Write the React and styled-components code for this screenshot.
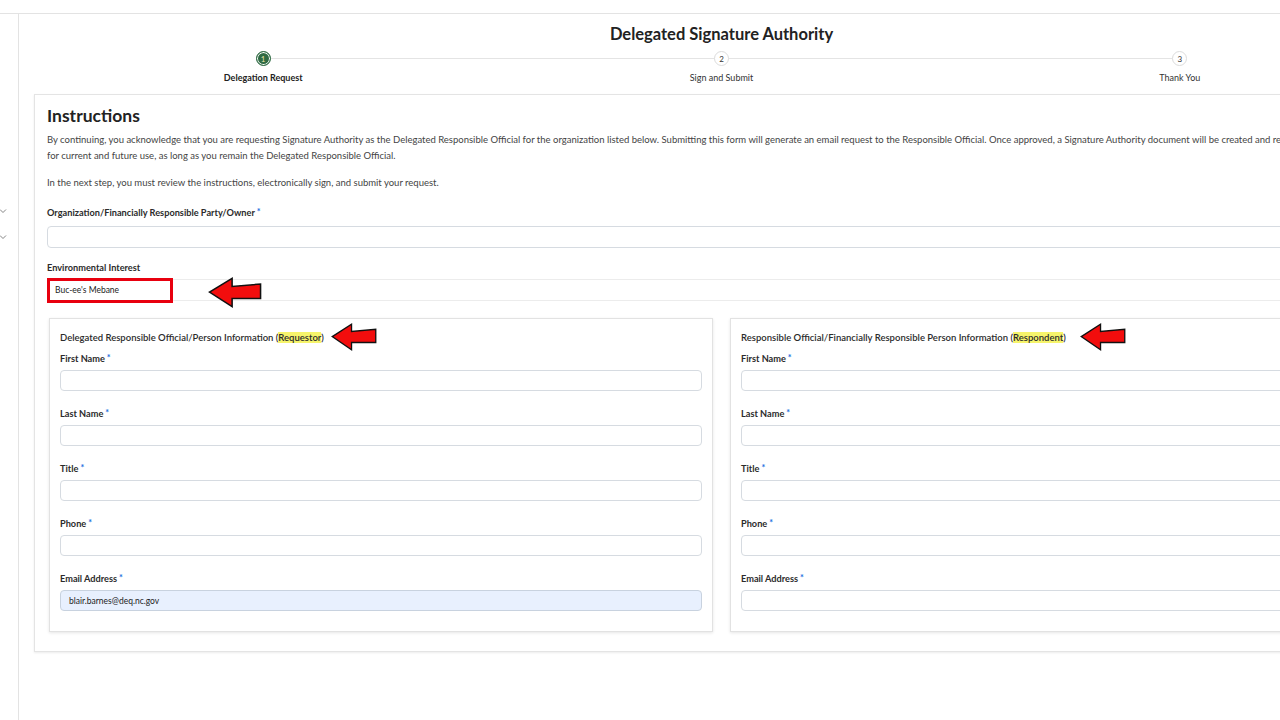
import React from "react";
import styled, { createGlobalStyle } from "styled-components";

const GlobalStyle = createGlobalStyle`
  html, body {
    margin: 0;
    padding: 0;
    overflow: hidden;
    background: #fff;
  }
  body {
    font-family: Lato, "Open Sans", sans-serif;
    color: #2b2b2b;
  }
`;

const Shell = styled.div`
  display: flex;
  flex-direction: column;
  min-height: 720px;
`;

const TopBar = styled.div`
  height: 13px;
  border-bottom: 1px solid #e3e3e3;
`;

const Body = styled.div`
  display: flex;
  flex: 1;
`;

const Sidebar = styled.aside`
  width: 19px;
  flex-shrink: 0;
  border-right: 1px solid #e3e3e3;
  display: flex;
  flex-direction: column;
  gap: 18px;
  padding-top: 193px;
  min-height: 706px;
  box-sizing: border-box;
`;

const Chevron = styled.svg`
  width: 8px;
  height: 8px;
  margin-left: -1px;
`;

const Main = styled.main`
  width: 1375px;
  flex-shrink: 0;
  padding-left: 15px;
`;

const Title = styled.h1`
  margin: 0;
  padding-top: 9px;
  font-size: 16.5px;
  line-height: 22px;
  font-weight: 700;
  text-align: center;
  color: #222;
`;

const Stepper = styled.div`
  position: relative;
  display: grid;
  grid-template-columns: repeat(3, 1fr);
  margin-top: 5px;
  height: 44px;
`;

const StepLine = styled.div`
  position: absolute;
  top: 8px;
  left: 16.667%;
  right: 16.667%;
  height: 1px;
  background: #e4e4e4;
`;

const Step = styled.div`
  position: relative;
  display: flex;
  flex-direction: column;
  align-items: center;
`;

const StepDot = styled.div`
  width: 15px;
  height: 15px;
  box-sizing: border-box;
  border-radius: 50%;
  display: flex;
  align-items: center;
  justify-content: center;
  font-size: 8px;
  background: ${(p) => (p.$active ? "#2f6b43" : "#fff")};
  color: ${(p) => (p.$active ? "#e9e3a8" : "#333")};
  border: 1px solid ${(p) => (p.$active ? "#2f6b43" : "#dcdcdc")};
  box-shadow: ${(p) => (p.$active ? "inset 0 0 0 1px #fff" : "none")};
  margin-top: 1px;
`;

const StepLabel = styled.div`
  margin-top: 6px;
  font-size: 9px;
  font-weight: ${(p) => (p.$active ? 700 : 400)};
  color: ${(p) => (p.$active ? "#222" : "#333")};
`;

const Card = styled.section`
  position: relative;
  border: 1px solid #e4e4e4;
  box-shadow: 0 1px 2px rgba(0, 0, 0, 0.08);
  padding: 9px 12px 20px;
  height: 558px;
  box-sizing: border-box;
`;

const Heading = styled.h2`
  margin: 0;
  font-size: 17.5px;
  line-height: 24px;
  font-weight: 700;
  color: #222;
`;

const Para = styled.p`
  margin: ${(p) => (p.$first ? "4px" : "11px")} 0 0;
  font-size: 9.5px;
  line-height: 16px;
  color: #444;
  white-space: nowrap;
`;

const Field = styled.div`
  position: relative;
  display: flex;
  flex-direction: column;
  gap: ${(p) => (p.$tight ? "5px" : "7px")};
  margin-top: ${(p) => p.$top || "0"};
`;

const Label = styled.label`
  font-size: 9.2px;
  line-height: 12px;
  font-weight: 700;
  color: #2b2b2b;
`;

const Req = styled.span`
  color: #1b6fe0;
  font-size: 9px;
  font-weight: 700;
  vertical-align: top;
  line-height: 9px;
  margin-left: 2px;
`;

const Input = styled.div`
  height: ${(p) => (p.$tall ? "22px" : "21px")};
  box-sizing: border-box;
  border: 1px solid ${(p) => (p.$filled ? "#c8d2df" : "#d6dbe1")};
  border-radius: 4px;
  background: ${(p) => (p.$filled ? "#e8f0fe" : "#fff")};
  font-size: 8.5px;
  display: flex;
  align-items: center;
  padding-left: 8px;
  color: #222;
`;

const ReadOnly = styled.div`
  height: 22px;
  box-sizing: border-box;
  border-top: 1px solid #ececec;
  border-bottom: 1px solid #ececec;
  display: flex;
  align-items: center;
  padding-left: 8px;
  font-size: 8.5px;
  color: #222;
`;

const RedBox = styled.div`
  position: absolute;
  left: 0;
  bottom: -2px;
  width: 126px;
  height: 25px;
  box-sizing: border-box;
  border: 3px solid #e8000f;
`;

const Arrow = styled.svg`
  position: absolute;
  left: ${(p) => p.$x}px;
  top: ${(p) => p.$y}px;
  width: ${(p) => p.$w}px;
  height: ${(p) => p.$h}px;
`;

const Columns = styled.div`
  display: grid;
  grid-template-columns: 664px 664px;
  gap: 17px;
  margin: 17px 0 0 2px;
`;

const Panel = styled.div`
  position: relative;
  border: 1px solid #e2e2e2;
  box-shadow: 0 1px 3px rgba(0, 0, 0, 0.1);
  padding: 13px 10px 20px;
  display: flex;
  flex-direction: column;
`;

const PanelTitle = styled.div`
  font-size: 9.5px;
  line-height: 12px;
  font-weight: 600;
  color: #2b2b2b;
  margin-bottom: 9px;
`;

const Mark = styled.span`
  background: #f6f46b;
`;

const Stack = styled.div`
  display: flex;
  flex-direction: column;
  gap: 17px;
`;

const steps = ["Delegation Request", "Sign and Submit", "Thank You"];
const people = ["First Name", "Last Name", "Title", "Phone", "Email Address"];

const RedArrow = ({ x, y, w = 54, h = 31 }) => (
  <Arrow $x={x} $y={y} $w={w} $h={h} viewBox="0 0 56 33" preserveAspectRatio="none">
    <polygon
      points="1.5,16 25,1.5 25,10 54.5,7.5 54.5,23 25,23 25,31.5"
      fill="#f20d0d"
      stroke="#111"
      strokeWidth="1.6"
      strokeLinejoin="miter"
    />
  </Arrow>
);

const ChevronIcon = () => (
  <Chevron viewBox="0 0 8 8">
    <path d="M1 2.5 L4 5.5 L7 2.5" fill="none" stroke="#777" strokeWidth="0.9" />
  </Chevron>
);

const PersonPanel = ({ title, tag, email, arrowX }) => (
  <Panel>
    <PanelTitle>
      {title} (<Mark>{tag}</Mark>)
    </PanelTitle>
    <RedArrow x={arrowX} y={4} w={46} h={28} />
    <Stack>
      {people.map((name) => (
        <Field key={name} $tight>
          <Label>
            {name}
            <Req>*</Req>
          </Label>
          <Input $filled={email && name === "Email Address"}>
            {email && name === "Email Address" ? email : ""}
          </Input>
        </Field>
      ))}
    </Stack>
  </Panel>
);

const App = () => (
  <Shell>
    <GlobalStyle />
    <TopBar />
    <Body>
      <Sidebar>
        <ChevronIcon />
        <ChevronIcon />
      </Sidebar>
      <Main>
        <Title>Delegated Signature Authority</Title>
        <Stepper>
          <StepLine />
          {steps.map((s, i) => (
            <Step key={s}>
              <StepDot $active={i === 0}>{i + 1}</StepDot>
              <StepLabel $active={i === 0}>{s}</StepLabel>
            </Step>
          ))}
        </Stepper>
        <Card>
          <Heading>Instructions</Heading>
          <Para $first>
            By continuing, you acknowledge that you are requesting Signature Authority as the Delegated Responsible Official for the organization listed below. Submitting this form will generate an email request to the Responsible Official. Once approved, a Signature Authority document will be created and retained
            <br />
            for current and future use, as long as you remain the Delegated Responsible Official.
          </Para>
          <Para>In the next step, you must review the instructions, electronically sign, and submit your request.</Para>
          <Field $top="16px">
            <Label>
              Organization/Financially Responsible Party/Owner<Req>*</Req>
            </Label>
            <Input $tall />
          </Field>
          <Field $top="14px" $tight>
            <Label>Environmental Interest</Label>
            <ReadOnly>Buc-ee's Mebane</ReadOnly>
            <RedBox />
            <RedArrow x={161} y={15} w={54} h={31} />
          </Field>
          <Columns>
            <PersonPanel
              title="Delegated Responsible Official/Person Information"
              tag="Requestor"
              email="blair.barnes@deq.nc.gov"
              arrowX={281}
            />
            <PersonPanel
              title="Responsible Official/Financially Responsible Person Information"
              tag="Respondent"
              arrowX={349}
            />
          </Columns>
        </Card>
      </Main>
    </Body>
  </Shell>
);

export default App;
